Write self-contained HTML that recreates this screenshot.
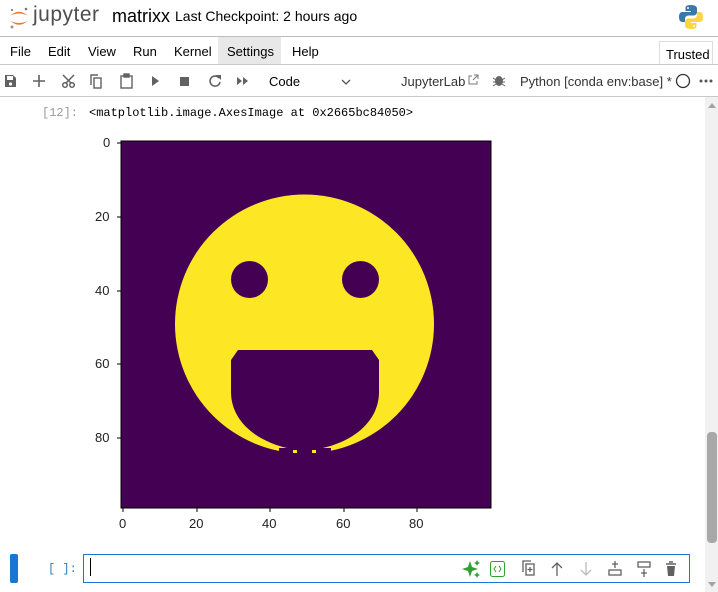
<!DOCTYPE html>
<html><head><meta charset="utf-8"><style>
*{margin:0;padding:0;box-sizing:border-box}
body{width:718px;height:592px;overflow:hidden;background:#fff;font-family:"Liberation Sans",sans-serif;position:relative;color:#000}
.a{position:absolute}
.mono{font-family:"Liberation Mono",monospace}
.menu span{position:absolute;top:44px;font-size:13px}
.tk{font-size:13px;color:#222}
</style></head><body>
<!-- header -->
<svg class="a" style="left:8px;top:6px" width="22" height="24" viewBox="0 0 22 24">
<path d="M2.5 9.5 Q11 2 19.5 9.5 Q11 5.5 2.5 9.5Z" fill="#f37726"/>
<path d="M2.5 15 Q11 22.5 19.5 15 Q11 19 2.5 15Z" fill="#f37726"/>
<circle cx="18" cy="3" r="1.3" fill="#767677"/><circle cx="4" cy="21" r="1.5" fill="#989798"/><circle cx="4" cy="4" r="1" fill="#616262"/>
</svg>
<div class="a" style="left:33px;top:3px;font-size:21px;color:#4e4e4e;letter-spacing:.5px">jupyter</div>
<div class="a" style="left:112px;top:6px;font-size:18px">matrixx</div>
<div class="a" style="left:175px;top:8px;font-size:14px">Last Checkpoint: 2 hours ago</div>
<svg class="a" style="left:678px;top:4px" width="26" height="26" viewBox="0 0 26 26">
<path d="M12.5 1c-5 0-5 2-5 3.5V7h5.5v1H4.5C2 8 1 10 1 13s1 5 3.5 5H7v-3c0-2 1.5-3.5 3.5-3.5h5c2 0 3.5-1.5 3.5-3.5V4.5C19 2.5 17 1 12.5 1z" fill="#3b77a8"/>
<path d="M13.5 25c5 0 5-2 5-3.5V19H13v-1h8.5C24 18 25 16 25 13s-1-5-3.5-5H19v3c0 2-1.5 3.5-3.5 3.5h-5C8.5 14.5 7 16 7 18v3.5c0 2 2 3.5 6.5 3.5z" fill="#fdd443"/>
<circle cx="10" cy="4" r="1" fill="#fff"/><circle cx="16" cy="22" r="1" fill="#fff"/></svg>
<div class="a" style="left:0;top:36px;width:718px;height:1px;background:#bdbdbd"></div>
<!-- menu -->
<div class="a" style="left:218px;top:37px;width:63px;height:27px;background:#e8e8e8"></div>
<div class="menu"><span style="left:10px">File</span><span style="left:48px">Edit</span><span style="left:88px">View</span><span style="left:133px">Run</span><span style="left:174px">Kernel</span><span style="left:227px">Settings</span><span style="left:292px">Help</span></div>
<div class="a" style="left:659px;top:41px;width:54px;height:24px;border:1px solid #ddd;border-bottom:none;font-size:13px;padding:5px 0 0 6px">Trusted</div>
<div class="a" style="left:0;top:64px;width:718px;height:1px;background:#c8c8c8"></div>
<!-- toolbar -->
<svg class="a" style="left:0;top:70px" width="260" height="22" viewBox="0 0 260 22" fill="#616161">
<path d="M5 5h8l3 3v9H5z M7 6v4h6V6z" fill-rule="evenodd"/><circle cx="10.5" cy="14" r="1.6" fill="#fff"/>
<path d="M39 5v12M33 11h12" stroke="#616161" stroke-width="1.6"/>
<g stroke="#616161" stroke-width="1.5" fill="none"><circle cx="65" cy="15" r="2.3"/><circle cx="72" cy="15" r="2.3"/><path d="M66 13L74 5M71 13L63 5"/></g>
<g stroke="#616161" stroke-width="1.4" fill="none"><rect x="94" y="8" width="7" height="10"/><path d="M91 15V5h7"/></g>
<g stroke="#616161" stroke-width="1.4" fill="none"><rect x="121" y="6" width="11" height="12"/><rect x="124" y="4" width="5" height="3" fill="#616161"/></g>
<path d="M152 6l7 5-7 5z"/><rect x="180" y="7" width="9" height="9"/>
<path d="M219 8a5 5 0 1 0 1 4" stroke="#616161" stroke-width="1.6" fill="none"/><path d="M216 5h5v5z"/>
<path d="M237 7l5 4-5 4zM243 7l5 4-5 4z"/>
</svg>
<div class="a" style="left:269px;top:74px;font-size:13px">Code</div>
<svg class="a" style="left:341px;top:78px" width="10" height="8"><path d="M1 2l4 4 4-4" stroke="#555" stroke-width="1.3" fill="none"/></svg>
<div class="a" style="left:401px;top:74px;font-size:13px;color:#333">JupyterLab</div>
<svg class="a" style="left:467px;top:74px" width="12" height="12"><path d="M5 2H2v8h8V7M7 1h4v4M11 1L6 6" stroke="#777" fill="none"/></svg>
<svg class="a" style="left:492px;top:73px" width="14" height="14"><ellipse cx="7" cy="8" rx="4" ry="5" fill="#666"/><path d="M1 5l3 2M13 5l-3 2M1 9h3M13 9h-3M1 13l3-2M13 13l-3-2" stroke="#666"/></svg>
<div class="a" style="left:520px;top:74px;font-size:13px;color:#333">Python [conda env:base] *</div>
<svg class="a" style="left:675px;top:73px" width="16" height="16"><circle cx="8" cy="8" r="6.5" stroke="#333" stroke-width="1.3" fill="none"/></svg>
<svg class="a" style="left:698px;top:78px" width="16" height="6"><circle cx="3" cy="3" r="1.5" fill="#555"/><circle cx="8" cy="3" r="1.5" fill="#555"/><circle cx="13" cy="3" r="1.5" fill="#555"/></svg>
<div class="a" style="left:0;top:96px;width:718px;height:1px;background:#c8c8c8"></div>
<!-- scrollbar -->
<div class="a" style="left:705px;top:97px;width:13px;height:495px;background:#f1f1f1"></div>
<svg class="a" style="left:706px;top:100px" width="12" height="10"><path d="M2 8l4-5 4 5z" fill="#a3a3a3"/></svg>
<div class="a" style="left:707px;top:432px;width:10px;height:111px;background:#a8a8a8;border-radius:4px"></div>
<svg class="a" style="left:706px;top:580px" width="12" height="10"><path d="M2 2l4 5 4-5z" fill="#a3a3a3"/></svg>
<!-- output -->
<div class="a mono" style="left:42px;top:106px;font-size:12px;color:#999">[12]:</div>
<div class="a mono" style="left:89px;top:106px;font-size:12px">&lt;matplotlib.image.AxesImage at 0x2665bc84050&gt;</div>
<svg class="a" style="left:0;top:0" width="700" height="592">
<rect x="121" y="141" width="370" height="367" fill="#440154" stroke="#000" stroke-width="1"/>
<circle cx="304.5" cy="324" r="129.5" fill="#fde725"/>
<circle cx="249.5" cy="279.5" r="18.5" fill="#440154"/>
<circle cx="360.5" cy="279.5" r="18.5" fill="#440154"/>
<path d="M238 350H372L379 360V392C379 420 355 442 318 449H292C255 442 231 420 231 392V360Z" fill="#440154"/>
<rect x="279" y="448" width="52" height="8" fill="#440154"/>
<rect x="293" y="450" width="4" height="3" fill="#fde725"/><rect x="312" y="450" width="4" height="3" fill="#fde725"/>
<rect x="121" y="141" width="370" height="367" fill="none" stroke="#000" stroke-width="1"/>
<g stroke="#000"><path d="M117 143h4M117 217h4M117 291h4M117 364h4M117 438h4M123 508v4M197 508v4M270 508v4M344 508v4M417 508v4"/></g>
</svg>
<div class="a tk" style="left:103px;top:135px">0</div>
<div class="a tk" style="left:95px;top:209px">20</div>
<div class="a tk" style="left:95px;top:283px">40</div>
<div class="a tk" style="left:95px;top:356px">60</div>
<div class="a tk" style="left:95px;top:430px">80</div>
<div class="a tk" style="left:119px;top:516px">0</div>
<div class="a tk" style="left:189px;top:516px">20</div>
<div class="a tk" style="left:262px;top:516px">40</div>
<div class="a tk" style="left:336px;top:516px">60</div>
<div class="a tk" style="left:409px;top:516px">80</div>
<!-- input cell -->
<div class="a" style="left:10px;top:554px;width:8px;height:29px;background:#1976d2;border-radius:2px"></div>
<div class="a mono" style="left:48px;top:562px;font-size:12px;color:#307fc1">[ ]:</div>
<div class="a" style="left:83px;top:554px;width:607px;height:29px;border:1px solid #1976d2;background:#fff"></div>
<div class="a" style="left:90px;top:558px;width:1px;height:18px;background:#000"></div>
<svg class="a" style="left:460px;top:558px" width="230" height="22">
<path d="M10 3l2 6 6 2-6 2-2 6-2-6-6-2 6-2z" fill="#2ea12e"/><path d="M17 2l1 2 2 1-2 1-1 2-1-2-2-1 2-1z M17 14l1 2 2 1-2 1-1 2-1-2-2-1 2-1z" fill="#2ea12e"/>
<rect x="30.5" y="3.5" width="14" height="15" rx="2" stroke="#2ea12e" fill="none"/><path d="M36 8l-2 3 2 3M39 8l2 3-2 3" stroke="#2ea12e" fill="none"/>
<g stroke="#616161" stroke-width="1.3" fill="none"><rect x="66" y="6" width="8" height="11"/><path d="M63 14V3h8M70 9v5M67.5 11.5h5"/>
<path d="M97 18V5M92 10l5-5 5 5"/></g>
<path d="M126 4v13M121 12l5 5 5-5" stroke="#bbb" stroke-width="1.3" fill="none"/>
<g stroke="#616161" stroke-width="1.3" fill="none"><rect x="149" y="12" width="12" height="5"/><path d="M155 3v7M152 6h6"/>
<rect x="178" y="4" width="12" height="5"/><path d="M184 11v8M181 15h6"/></g>
<path d="M206 6h10M209 4h4" stroke="#616161" stroke-width="1.5"/><path d="M207 8h8l-1 10h-6z" fill="#616161"/>
</svg>
</body></html>
